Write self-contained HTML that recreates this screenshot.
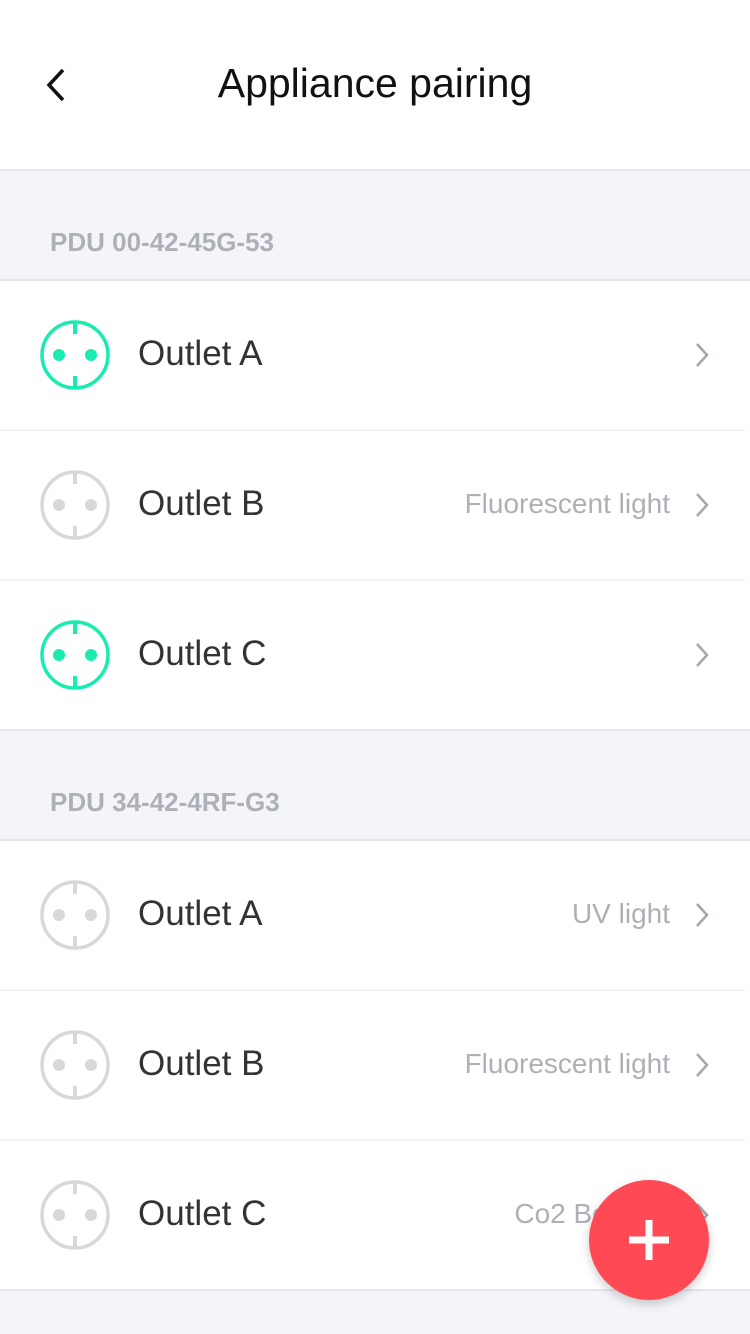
<!DOCTYPE html><html><head><style>
body{margin:0;width:750px;height:1334px;background:#f4f5f9;font-family:"Liberation Sans",sans-serif;position:relative;overflow:hidden}
.hdr{position:absolute;top:0;left:0;width:750px;height:169px;background:#fff;border-bottom:2px solid #e4e5ea}
.hdr h1{margin:0;position:absolute;top:60px;width:750px;text-align:center;font-weight:normal;font-size:41px;color:#111}
.sec{position:absolute;left:50px;font-size:26px;font-weight:bold;color:#aeb0b8}
.row{position:absolute;left:0;width:750px;height:150px;background:#fff}
.row .n{position:absolute;left:138px;top:53px;font-size:35px;color:#333}
.row .v{position:absolute;right:80px;top:57px;font-size:28px;color:#aeb0b8}
.row svg.i{position:absolute;left:38px;top:38px}
.row svg.c{position:absolute;left:694px;top:61px}
.sep{position:absolute;left:0;width:750px;height:2px;background:#e4e5ea}
.sp{position:absolute;left:0;width:745px;height:2px;background:#f1f1f3}
.fab{position:absolute;left:589px;top:1180px;width:120px;height:120px;border-radius:60px;background:#ff4a55;box-shadow:0 4px 10px rgba(0,0,0,.2)}
</style></head><body>
<div class="hdr"><svg style="position:absolute;left:42px;top:66px" width="26" height="38"><path d="M21 4 L7 19 L21 34" stroke="#111" stroke-width="3.5" fill="none"/></svg><h1>Appliance pairing</h1></div>
<div class="sec" style="top:227px">PDU 00-42-45G-53</div>
<div class="sep" style="top:279px"></div>
<div class="sec" style="top:787px">PDU 34-42-4RF-G3</div>
<div class="sep" style="top:729px"></div>
<div class="sep" style="top:839px"></div>
<div class="sep" style="top:1289px"></div>
<div class="row" style="top:281px"><svg class="i" width="74" height="74"><circle cx="37" cy="36" r="33" fill="none" stroke="#1aebb0" stroke-width="3.5"/><circle cx="21" cy="36" r="6" fill="#1aebb0"/><circle cx="53" cy="36" r="6" fill="#1aebb0"/><path d="M37 3V15M37 57V69" stroke="#1aebb0" stroke-width="4"/></svg><span class="n">Outlet A</span><svg class="c" width="16" height="26"><path d="M3 2L13 13L3 24" stroke="#a4a6ae" stroke-width="2.5" fill="none"/></svg></div>
<div class="sp" style="top:429px"></div>
<div class="row" style="top:431px"><svg class="i" width="74" height="74"><circle cx="37" cy="36" r="33" fill="none" stroke="#d8d8d8" stroke-width="3.5"/><circle cx="21" cy="36" r="6" fill="#d8d8d8"/><circle cx="53" cy="36" r="6" fill="#d8d8d8"/><path d="M37 3V15M37 57V69" stroke="#d8d8d8" stroke-width="4"/></svg><span class="n">Outlet B</span><span class="v">Fluorescent light</span><svg class="c" width="16" height="26"><path d="M3 2L13 13L3 24" stroke="#a4a6ae" stroke-width="2.5" fill="none"/></svg></div>
<div class="sp" style="top:579px"></div>
<div class="row" style="top:581px;height:148px"><svg class="i" width="74" height="74"><circle cx="37" cy="36" r="33" fill="none" stroke="#1aebb0" stroke-width="3.5"/><circle cx="21" cy="36" r="6" fill="#1aebb0"/><circle cx="53" cy="36" r="6" fill="#1aebb0"/><path d="M37 3V15M37 57V69" stroke="#1aebb0" stroke-width="4"/></svg><span class="n">Outlet C</span><svg class="c" width="16" height="26"><path d="M3 2L13 13L3 24" stroke="#a4a6ae" stroke-width="2.5" fill="none"/></svg></div>
<div class="row" style="top:841px"><svg class="i" width="74" height="74"><circle cx="37" cy="36" r="33" fill="none" stroke="#d8d8d8" stroke-width="3.5"/><circle cx="21" cy="36" r="6" fill="#d8d8d8"/><circle cx="53" cy="36" r="6" fill="#d8d8d8"/><path d="M37 3V15M37 57V69" stroke="#d8d8d8" stroke-width="4"/></svg><span class="n">Outlet A</span><span class="v">UV light</span><svg class="c" width="16" height="26"><path d="M3 2L13 13L3 24" stroke="#a4a6ae" stroke-width="2.5" fill="none"/></svg></div>
<div class="sp" style="top:989px"></div>
<div class="row" style="top:991px"><svg class="i" width="74" height="74"><circle cx="37" cy="36" r="33" fill="none" stroke="#d8d8d8" stroke-width="3.5"/><circle cx="21" cy="36" r="6" fill="#d8d8d8"/><circle cx="53" cy="36" r="6" fill="#d8d8d8"/><path d="M37 3V15M37 57V69" stroke="#d8d8d8" stroke-width="4"/></svg><span class="n">Outlet B</span><span class="v">Fluorescent light</span><svg class="c" width="16" height="26"><path d="M3 2L13 13L3 24" stroke="#a4a6ae" stroke-width="2.5" fill="none"/></svg></div>
<div class="sp" style="top:1139px"></div>
<div class="row" style="top:1141px;height:148px"><svg class="i" width="74" height="74"><circle cx="37" cy="36" r="33" fill="none" stroke="#d8d8d8" stroke-width="3.5"/><circle cx="21" cy="36" r="6" fill="#d8d8d8"/><circle cx="53" cy="36" r="6" fill="#d8d8d8"/><path d="M37 3V15M37 57V69" stroke="#d8d8d8" stroke-width="4"/></svg><span class="n">Outlet C</span><span class="v">Co2 Booster</span><svg class="c" width="16" height="26"><path d="M3 2L13 13L3 24" stroke="#a4a6ae" stroke-width="2.5" fill="none"/></svg></div>
<div class="fab"><svg width="120" height="120"><path d="M60 40V80M40 60H80" stroke="#fff" stroke-width="7"/></svg></div>
</body></html>
